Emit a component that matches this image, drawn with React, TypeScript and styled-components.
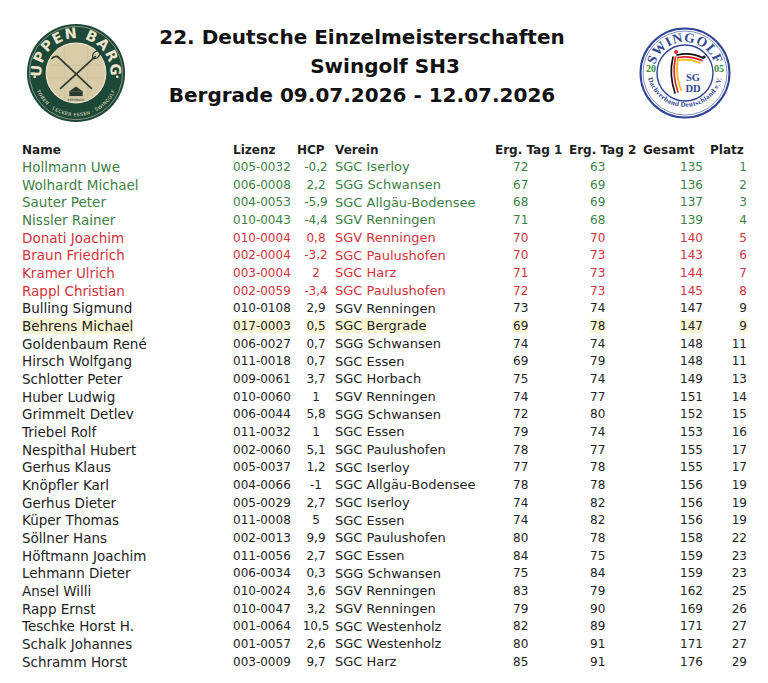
import React from 'react';
import styled, { createGlobalStyle } from 'styled-components';

type Tone = 'green' | 'red' | 'plain';

interface IResult {
  name: string;
  lizenz: string;
  hcp: string;
  verein: string;
  tag1: number;
  tag2: number;
  gesamt: number;
  platz: number;
  tone?: Tone;
  mark?: boolean;
}

const results: IResult[] = [
  { name: 'Hollmann Uwe', lizenz: '005-0032', hcp: '-0,2', verein: 'SGC Iserloy', tag1: 72, tag2: 63, gesamt: 135, platz: 1, tone: 'green' },
  { name: 'Wolhardt Michael', lizenz: '006-0008', hcp: '2,2', verein: 'SGG Schwansen', tag1: 67, tag2: 69, gesamt: 136, platz: 2, tone: 'green' },
  { name: 'Sauter Peter', lizenz: '004-0053', hcp: '-5,9', verein: 'SGC Allgäu-Bodensee', tag1: 68, tag2: 69, gesamt: 137, platz: 3, tone: 'green' },
  { name: 'Nissler Rainer', lizenz: '010-0043', hcp: '-4,4', verein: 'SGV Renningen', tag1: 71, tag2: 68, gesamt: 139, platz: 4, tone: 'green' },
  { name: 'Donati Joachim', lizenz: '010-0004', hcp: '0,8', verein: 'SGV Renningen', tag1: 70, tag2: 70, gesamt: 140, platz: 5, tone: 'red' },
  { name: 'Braun Friedrich', lizenz: '002-0004', hcp: '-3,2', verein: 'SGC Paulushofen', tag1: 70, tag2: 73, gesamt: 143, platz: 6, tone: 'red' },
  { name: 'Kramer Ulrich', lizenz: '003-0004', hcp: '2', verein: 'SGC Harz', tag1: 71, tag2: 73, gesamt: 144, platz: 7, tone: 'red' },
  { name: 'Rappl Christian', lizenz: '002-0059', hcp: '-3,4', verein: 'SGC Paulushofen', tag1: 72, tag2: 73, gesamt: 145, platz: 8, tone: 'red' },
  { name: 'Bulling Sigmund', lizenz: '010-0108', hcp: '2,9', verein: 'SGV Renningen', tag1: 73, tag2: 74, gesamt: 147, platz: 9 },
  { name: 'Behrens Michael', lizenz: '017-0003', hcp: '0,5', verein: 'SGC Bergrade', tag1: 69, tag2: 78, gesamt: 147, platz: 9, mark: true },
  { name: 'Goldenbaum René', lizenz: '006-0027', hcp: '0,7', verein: 'SGG Schwansen', tag1: 74, tag2: 74, gesamt: 148, platz: 11 },
  { name: 'Hirsch Wolfgang', lizenz: '011-0018', hcp: '0,7', verein: 'SGC Essen', tag1: 69, tag2: 79, gesamt: 148, platz: 11 },
  { name: 'Schlotter Peter', lizenz: '009-0061', hcp: '3,7', verein: 'SGC Horbach', tag1: 75, tag2: 74, gesamt: 149, platz: 13 },
  { name: 'Huber Ludwig', lizenz: '010-0060', hcp: '1', verein: 'SGV Renningen', tag1: 74, tag2: 77, gesamt: 151, platz: 14 },
  { name: 'Grimmelt Detlev', lizenz: '006-0044', hcp: '5,8', verein: 'SGG Schwansen', tag1: 72, tag2: 80, gesamt: 152, platz: 15 },
  { name: 'Triebel Rolf', lizenz: '011-0032', hcp: '1', verein: 'SGC Essen', tag1: 79, tag2: 74, gesamt: 153, platz: 16 },
  { name: 'Nespithal Hubert', lizenz: '002-0060', hcp: '5,1', verein: 'SGC Paulushofen', tag1: 78, tag2: 77, gesamt: 155, platz: 17 },
  { name: 'Gerhus Klaus', lizenz: '005-0037', hcp: '1,2', verein: 'SGC Iserloy', tag1: 77, tag2: 78, gesamt: 155, platz: 17 },
  { name: 'Knöpfler Karl', lizenz: '004-0066', hcp: '-1', verein: 'SGC Allgäu-Bodensee', tag1: 78, tag2: 78, gesamt: 156, platz: 19 },
  { name: 'Gerhus Dieter', lizenz: '005-0029', hcp: '2,7', verein: 'SGC Iserloy', tag1: 74, tag2: 82, gesamt: 156, platz: 19 },
  { name: 'Küper Thomas', lizenz: '011-0008', hcp: '5', verein: 'SGC Essen', tag1: 74, tag2: 82, gesamt: 156, platz: 19 },
  { name: 'Söllner Hans', lizenz: '002-0013', hcp: '9,9', verein: 'SGC Paulushofen', tag1: 80, tag2: 78, gesamt: 158, platz: 22 },
  { name: 'Höftmann Joachim', lizenz: '011-0056', hcp: '2,7', verein: 'SGC Essen', tag1: 84, tag2: 75, gesamt: 159, platz: 23 },
  { name: 'Lehmann Dieter', lizenz: '006-0034', hcp: '0,3', verein: 'SGG Schwansen', tag1: 75, tag2: 84, gesamt: 159, platz: 23 },
  { name: 'Ansel Willi', lizenz: '010-0024', hcp: '3,6', verein: 'SGV Renningen', tag1: 83, tag2: 79, gesamt: 162, platz: 25 },
  { name: 'Rapp Ernst', lizenz: '010-0047', hcp: '3,2', verein: 'SGV Renningen', tag1: 79, tag2: 90, gesamt: 169, platz: 26 },
  { name: 'Teschke Horst H.', lizenz: '001-0064', hcp: '10,5', verein: 'SGC Westenholz', tag1: 82, tag2: 89, gesamt: 171, platz: 27 },
  { name: 'Schalk Johannes', lizenz: '001-0057', hcp: '2,6', verein: 'SGC Westenholz', tag1: 80, tag2: 91, gesamt: 171, platz: 27 },
  { name: 'Schramm Horst', lizenz: '003-0009', hcp: '9,7', verein: 'SGC Harz', tag1: 85, tag2: 91, gesamt: 176, platz: 29 },
];

const toneColor: Record<Tone, string> = {
  green: '#3f7f47',
  red: '#d2333d',
  plain: '#1e1e1e',
};

const GlobalStyle = createGlobalStyle`
  body {
    margin: 0;
    background: #ffffff;
    font-family: "DejaVu Sans", "Liberation Sans", sans-serif;
  }
`;

const Page = styled.div`
  width: 768px;
  height: 683px;
  overflow: hidden;
  background: #fff;
`;

const Header = styled.header`
  display: grid;
  grid-template-columns: 100px 1fr 92px;
  align-items: start;
  padding: 22px 37px 0 26px;
  height: 119px;
`;

const LeftLogo = styled.div`
  padding-top: 1px;
`;

const RightLogo = styled.div`
  padding-top: 5px;
`;

const Title = styled.div`
  padding: 1px 41px 0 0;
  text-align: center;
  font-weight: bold;
  font-size: 20px;
  line-height: 29px;
  color: #111;
`;

const TitleLine = styled.div<{ $shift?: number }>`
  padding-left: ${p => (p.$shift ? p.$shift * 2 : 0)}px;
  white-space: nowrap;
`;

const Table = styled.div`
  padding-left: 22px;
`;

const Row = styled.div<{ $tone: Tone; $head?: boolean }>`
  display: grid;
  grid-template-columns: 211px 64px 38px 160px 74px 74px 67px 40px;
  align-items: center;
  height: ${p => (p.$head ? '17px' : '17.68px')};
  font-size: ${p => (p.$head ? '12px' : '13px')};
  font-weight: ${p => (p.$head ? 'bold' : 'normal')};
  color: ${p => toneColor[p.$tone]};
  white-space: nowrap;
`;

const Cell = styled.div<{ $align?: 'left' | 'center' | 'right'; $pl?: number; $pr?: number; $size?: number }>`
  text-align: ${p => p.$align || 'left'};
  padding-left: ${p => p.$pl || 0}px;
  padding-right: ${p => p.$pr || 0}px;
  font-size: ${p => (p.$size ? `${p.$size}px` : 'inherit')};
`;

const Mark = styled.span<{ $on?: boolean }>`
  background: ${p => (p.$on ? '#fbf6d3' : 'transparent')};
`;

const UppenBargLogo = () => (
  <svg width="100" height="100" viewBox="0 0 104 104">
    <defs>
      <path id="ub-top" d="M 18.2 64.3 A 36 36 0 1 1 85.8 64.3" />
      <path id="ub-bottom" d="M 7 52 A 45 45 0 0 0 97 52" />
    </defs>
    <circle cx="52" cy="52" r="51" fill="#1d4837" />
    <circle cx="52" cy="52" r="48.5" fill="none" stroke="#d9ceb0" strokeWidth="0.6" />
    <circle cx="52" cy="52" r="31" fill="#d8cca8" stroke="#efe6cb" strokeWidth="1.2" />
    <g stroke="#c2b48f" strokeWidth="0.5" opacity="0.8">
      <line x1="26" y1="44" x2="78" y2="44" />
      <line x1="24" y1="57" x2="80" y2="57" />
      <line x1="40" y1="24" x2="40" y2="80" />
      <line x1="64" y1="24" x2="64" y2="80" />
    </g>
    <g stroke="#2e3a31" strokeWidth="1.8" strokeLinecap="round" fill="none">
      <line x1="33" y1="35" x2="68" y2="68" />
      <line x1="72" y1="35" x2="36" y2="68" />
      <path d="M 33 35 q -4 -1 -6 2" />
    </g>
    <ellipse cx="73" cy="33" rx="3" ry="4.5" fill="none" stroke="#2e3a31" strokeWidth="1.4" transform="rotate(40 73 33)" />
    <path d="M 45 71 L 52 66 L 59 71 Z" fill="#2e3a31" />
    <rect x="45" y="71" width="14" height="5" fill="#2e3a31" />
    <text x="52" y="81" textAnchor="middle" fontSize="3.2" fill="#2e3a31" fontFamily="DejaVu Sans, sans-serif">BERGRADE</text>
    <text fontFamily="DejaVu Sans, sans-serif" fontWeight="bold" fontSize="15" fill="#eee5cc" letterSpacing="1.2">
      <textPath href="#ub-top" startOffset="50%" textAnchor="middle">UPPEN BARG</textPath>
    </text>
    <text fontFamily="DejaVu Sans, sans-serif" fontSize="4.8" fill="#eee5cc" letterSpacing="0.5">
      <textPath href="#ub-bottom" startOffset="50%" textAnchor="middle">TOBEN · LECKER ESSEN · SWINGOLF</textPath>
    </text>
    <circle cx="9" cy="56" r="1.4" fill="#eee5cc" />
    <circle cx="95" cy="56" r="1.4" fill="#eee5cc" />
  </svg>
);

const SwingolfLogo = () => (
  <svg width="92" height="92" viewBox="0 0 92 92">
    <defs>
      <path id="sg-top" d="M 16.9 56.6 A 31 31 0 1 1 75.1 56.6" />
      <path id="sg-bottom" d="M 8 42 A 38 38 0 1 0 84 42" />
    </defs>
    <circle cx="46" cy="46" r="44.5" fill="#fff" stroke="#2f4595" strokeWidth="2" />
    <circle cx="46" cy="46" r="42" fill="none" stroke="#2f4595" strokeWidth="0.6" />
    <circle cx="46" cy="46" r="28" fill="none" stroke="#2f4595" strokeWidth="1.4" />
    <text fontFamily="Liberation Serif, serif" fontWeight="bold" fontSize="13.5" fill="#2f4595" letterSpacing="0.8">
      <textPath href="#sg-top" startOffset="50%" textAnchor="middle">SWINGOLF</textPath>
    </text>
    <text fontFamily="Liberation Serif, serif" fontWeight="bold" fontSize="7" fill="#2f4595" letterSpacing="0.3">
      <textPath href="#sg-bottom" startOffset="50%" textAnchor="middle">Dachverband Deutschland e.V.</textPath>
    </text>
    <text x="12" y="45" fontFamily="Liberation Serif, serif" fontWeight="bold" fontSize="10" fill="#3a8a3a" textAnchor="middle">20</text>
    <text x="80" y="45" fontFamily="Liberation Serif, serif" fontWeight="bold" fontSize="10" fill="#3a8a3a" textAnchor="middle">05</text>
    <g fill="none" strokeWidth="1.7" strokeLinecap="round">
      <path d="M 34 30 C 31 42, 32 54, 36 66" stroke="#111" />
      <path d="M 36.5 30 C 34 42, 35 54, 39 65" stroke="#d8262e" />
      <path d="M 39 30 C 37 42, 38 53, 42 63" stroke="#f2b900" />
      <path d="M 38 28 C 47 26, 56 27, 64 31" stroke="#111" />
      <path d="M 39 30.5 C 47 29, 55 30, 63 33.5" stroke="#d8262e" />
      <path d="M 40 33 C 47 32, 54 33, 61 36" stroke="#f2b900" />
    </g>
    <circle cx="37" cy="25" r="2" fill="#d8262e" />
    <circle cx="65" cy="30" r="1.6" fill="#111" />
    <text x="54" y="54" fontFamily="Liberation Serif, serif" fontWeight="bold" fontSize="10.5" fill="#2f4595" textAnchor="middle">SG</text>
    <text x="54" y="65" fontFamily="Liberation Serif, serif" fontWeight="bold" fontSize="10.5" fill="#2f4595" textAnchor="middle">DD</text>
  </svg>
);

const App: React.FC = () => {
  return (
    <Page>
      <GlobalStyle />
      <Header>
        <LeftLogo>
          <UppenBargLogo />
        </LeftLogo>
        <Title>
          <TitleLine>22. Deutsche Einzelmeisterschaften</TitleLine>
          <TitleLine $shift={23}>Swingolf SH3</TitleLine>
          <TitleLine>Bergrade 09.07.2026 - 12.07.2026</TitleLine>
        </Title>
        <RightLogo>
          <SwingolfLogo />
        </RightLogo>
      </Header>

      <Table>
        <Row $tone="plain" $head>
          <Cell>Name</Cell>
          <Cell>Lizenz</Cell>
          <Cell>HCP</Cell>
          <Cell>Verein</Cell>
          <Cell>Erg. Tag 1</Cell>
          <Cell>Erg. Tag 2</Cell>
          <Cell>Gesamt</Cell>
          <Cell>Platz</Cell>
        </Row>
        {results.map(r => (
          <Row key={r.name} $tone={r.tone || 'plain'}>
            <Cell $size={13.5}><Mark $on={r.mark}>{r.name}</Mark></Cell>
            <Cell $size={12}><Mark $on={r.mark}>{r.lizenz}</Mark></Cell>
            <Cell $size={12} $align="center"><Mark $on={r.mark}>{r.hcp}</Mark></Cell>
            <Cell><Mark $on={r.mark}>{r.verein}</Mark></Cell>
            <Cell $size={12} $pl={18}><Mark $on={r.mark}>{r.tag1}</Mark></Cell>
            <Cell $size={12} $pl={21}><Mark $on={r.mark}>{r.tag2}</Mark></Cell>
            <Cell $size={12} $align="right" $pr={7}><Mark $on={r.mark}>{r.gesamt}</Mark></Cell>
            <Cell $size={12} $align="right" $pr={3}><Mark $on={r.mark}>{r.platz}</Mark></Cell>
          </Row>
        ))}
      </Table>
    </Page>
  );
};

export default App;
